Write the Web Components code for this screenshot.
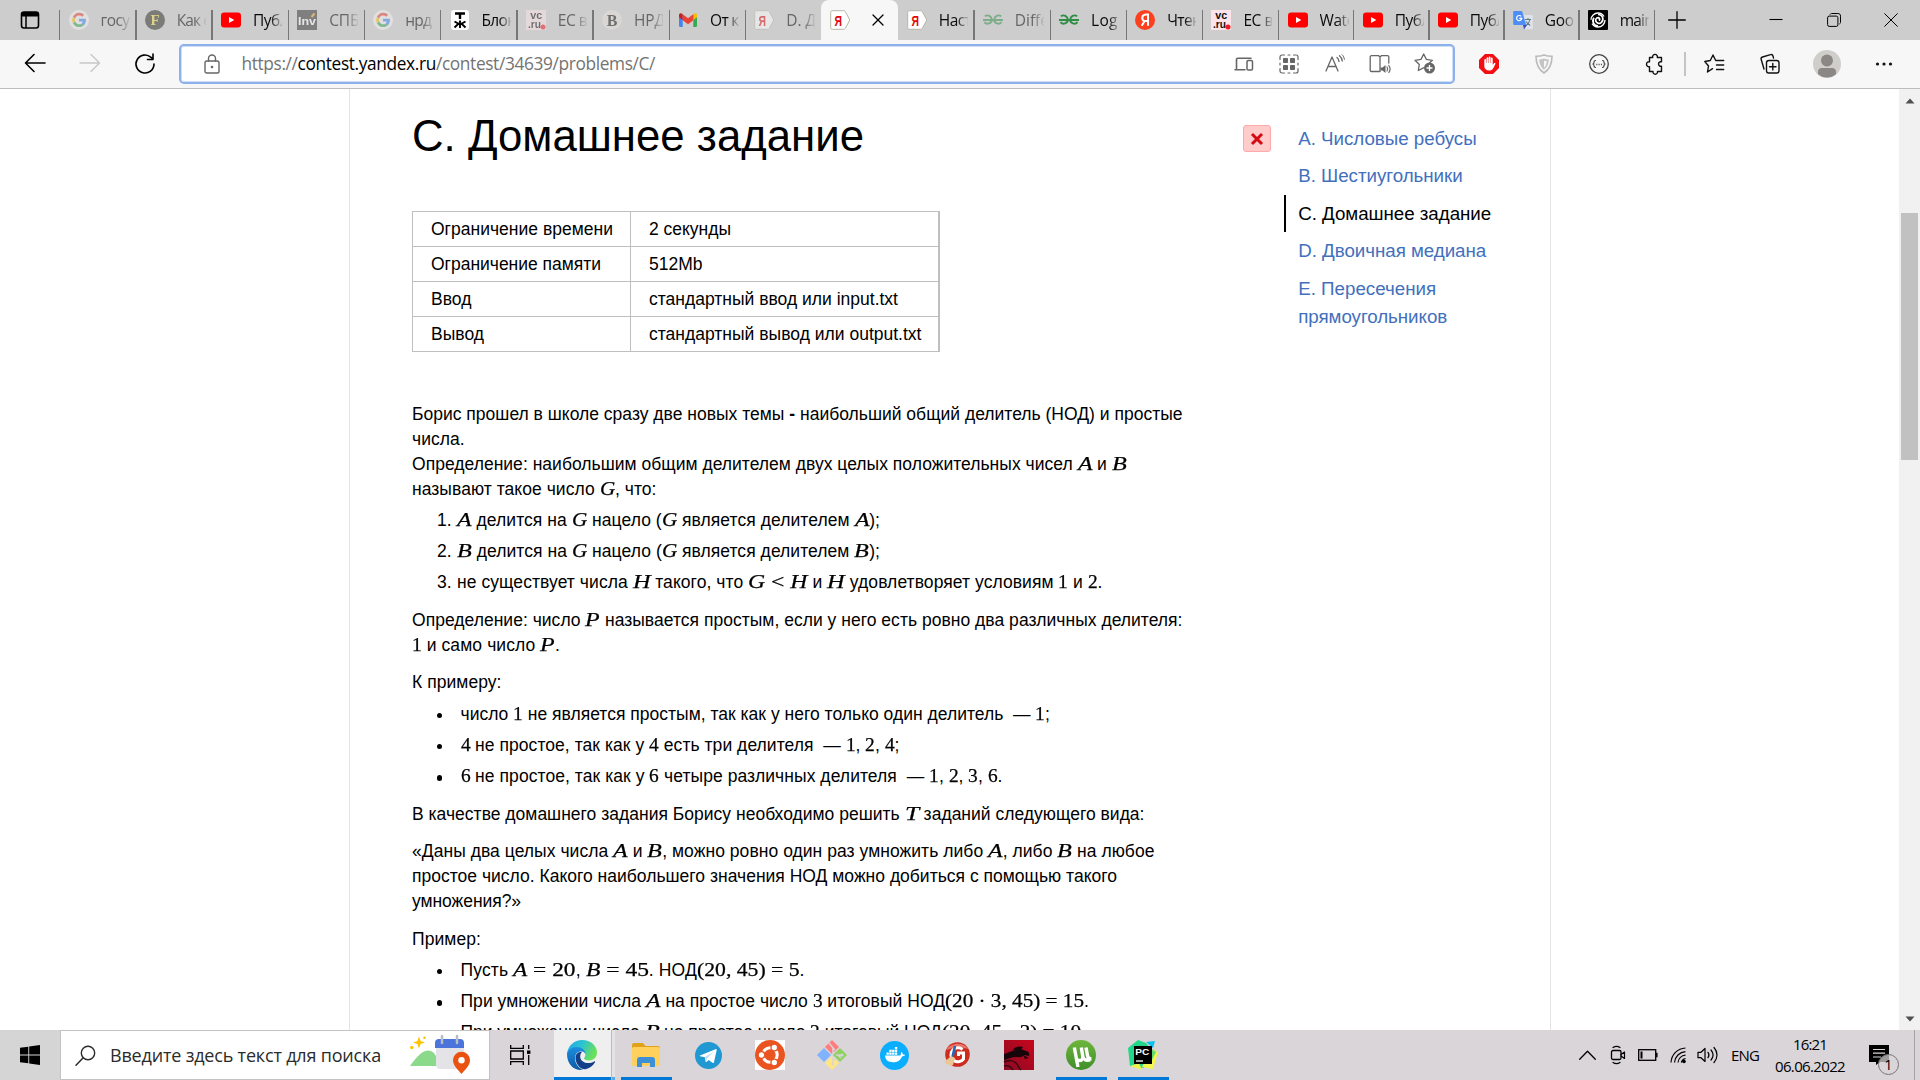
<!DOCTYPE html>
<html lang="ru">
<head>
<meta charset="utf-8">
<title>C. Домашнее задание</title>
<style>
html,body{margin:0;width:1920px;height:1080px;overflow:hidden;background:#fff;color:#000;font-family:"Liberation Sans",Arial,sans-serif}
body{display:flex;flex-direction:column}
</style>
</head>
<body>
<tab-strip></tab-strip>
<tool-bar></tool-bar>
<page-view>
  <problem-title slot="main"><fit-text w="452">C. Домашнее задание</fit-text></problem-title>
  <limits-table slot="main"></limits-table>
  <problem-statement slot="main"></problem-statement>
  <nav-item slot="nav" state="wrong"><fit-text w="178.500">A. Числовые ребусы</fit-text></nav-item>
  <nav-item slot="nav"><fit-text w="164.5">B. Шестиугольники</fit-text></nav-item>
  <nav-item slot="nav" current><fit-text w="193">C. Домашнее задание</fit-text></nav-item>
  <nav-item slot="nav"><fit-text w="188">D. Двоичная медиана</fit-text></nav-item>
  <nav-item slot="nav"><fit-text w="138">E. Пересечения</fit-text><br><fit-text w="149">прямоугольников</fit-text></nav-item>
</page-view>
<task-bar></task-bar>

<script>
const G='<path fill="#ea4335" d="M10 4.2c1.6 0 3 .6 4.100 1.600l2.500-2.500A9 9 0 0 0 2.200 5.800l3 2.300A5.100 5.100 0 0 1 10 4.200z"/><path fill="#fbbc05" d="M5.200 8.100l-3-2.300a9 9 0 0 0 0 8.400l3-2.300a5.500 5.500 0 0 1 0-3.800z"/><path fill="#34a853" d="M5.200 11.900l-3 2.300A9 9 0 0 0 16 17l-2.800-2.300c-2.800 1.900-6.800.6-8-2.800z"/><path fill="#4285f4" d="M10 8.300v3.600h4.800a4.200 4.200 0 0 1-1.600 2.800L16 17c2.200-2 3.200-5 2.800-8.700z"/>';
const YT='<rect y="2.500" width="20" height="15" rx="3.200" fill="#f00"/><path d="M8 7l5.300 3L8 13z" fill="#fff"/>';
const YA='<path d="M2.500.7h10.800c1 0 1.500.3 2 1l4 7.300c.4.700.4 1.300 0 2l-4 7.300c-.5.700-1 1-2 1H2.500c-1.200 0-1.800-.6-1.800-1.800v-15C.7 1.300 1.300.7 2.500.7z" fill="#fff" stroke="#b5b5a8"/><text x="8.300" y="16" text-anchor="middle" font-family="Liberation Sans" font-weight="700" font-size="15" textLength="7.500" lengthAdjust="spacingAndGlyphs" fill="#e0080c">Я</text>';
const VC='<rect width="20" height="20" fill="#fde4ea"/><text x="4.200" y="9" font-family="Liberation Sans" font-weight="700" font-size="10.500" textLength="12" lengthAdjust="spacingAndGlyphs" fill="#111">vc</text><text x="2" y="17.500" font-family="Liberation Sans" font-weight="700" font-size="10.500" textLength="13" lengthAdjust="spacingAndGlyphs" fill="#111">.ru</text><circle cx="17" cy="17" r="2.500" fill="#f01823"/>';
const GG='<g fill="none" stroke="#2f8d46" stroke-width="1.900"><path d="M1.800 6.200C5 4.300 8.500 6 8.800 9.500c.2 4-5 5.600-7.300 2.600M0 10h20M18.200 6.200c-3.200-1.900-6.700-.2-7 3.300-.2 4 5 5.600 7.300 2.600"/></g>';
const S='fill="none" stroke="currentColor" stroke-linecap="round" stroke-linejoin="round"';
/* name: [width, height, markup]; the viewBox always equals the drawn size */
const ICONS={
 tabs:[20,20,`<rect x="1.500" y="2" width="17" height="16" rx="2.500" ${S} stroke-width="1.600"/><path d="M1.500 6.500V4.500A2.500 2.500 0 0 1 4 2h12a2.500 2.500 0 0 1 2.500 2.500v2z" fill="currentColor"/><path d="M6 6v12" stroke="currentColor" stroke-width="1.500"/>`],
 google:[20,20,'<circle cx="10" cy="10" r="10" fill="#f4f4f4"/><g transform="translate(2.200 2.200) scale(.78)">'+G+'</g>'],
 forbes:[20,20,'<circle cx="10" cy="10" r="10" fill="#2b2b24"/><text x="10" y="15.300" text-anchor="middle" font-family="Liberation Serif" font-weight="700" font-size="15" fill="#f0d848">F</text>'],
 youtube:[20,20,YT],
 inv:[20,20,'<rect width="20" height="20" fill="#333"/><text x="1" y="15" font-family="Liberation Sans" font-weight="700" font-size="11.500" textLength="18" lengthAdjust="spacingAndGlyphs" fill="#fff">Inv</text><path d="M14.500 7l3-3.500" stroke="#f6a31b" stroke-width="2"/>'],
 tj:[20,20,'<rect width="18" height="20" x="1" rx="3" fill="#fff"/><path d="M5 3.500h10M10 3.500V9" stroke="#000" stroke-width="2.400"/><path d="M10 10.500V18M4.500 11.500l4 2.300-4 3.700M15.500 11.500l-4 2.300 4 3.700M8 14h4" stroke="#000" stroke-width="1.900" fill="none"/>'],
 vc:[20,20,VC],
 b:[20,20,'<circle cx="10" cy="10" r="10" fill="#e6e0dc"/><text x="10" y="15.500" text-anchor="middle" font-family="Liberation Serif" font-weight="700" font-size="16" fill="#111">B</text>'],
 gmail:[20,20,'<path d="M1 4.800h3.700V17H2.200C1.500 17 1 16.500 1 15.800z" fill="#4285f4"/><path d="M15.300 4.800H19v11c0 .7-.5 1.200-1.200 1.200h-2.500z" fill="#34a853"/><path d="M15.300 4.200c2-1.700 3.700-.7 3.700.8v2.200l-3.700 3z" fill="#fbbc04"/><path d="M4.700 4.200C2.700 2.500 1 3.500 1 5v2.200l3.700 3z" fill="#c5221f"/><path d="M4.700 4.200L10 8.300l5.300-4.100v6L10 14.300l-5.300-4.100z" fill="#ea4335"/>'],
 ya:[20,20,YA], gg:[20,20,GG],
 yared:[20,20,'<circle cx="10" cy="10" r="10" fill="#fc3f1d"/><path d="M13 15.800V4.500h-1.800c-4.800 0-5 5.300-1.700 6.700L6.700 15.800M13 11h-2.700" fill="none" stroke="#fff" stroke-width="2"/>'],
 translate:[20,20,'<path d="M7 5h11.500c.8 0 1.300.5 1.300 1.300V18c0 .8-.5 1.300-1.300 1.300H11z" fill="#dfe2e8"/><path d="M12 9.500h6M15 8v1.500M17 9.500c-.5 2.500-2 4.500-4 6M13.200 11.500c1 2 2.300 3 4 4" stroke="#607d8b" stroke-width="1.100" fill="none"/><path d="M10 15l4 0-3 4.500z" fill="#3a4fc0"/><path d="M1.500 1H9l4.300 14H1.500C.7 15 .2 14.500.2 13.700V2.300C.2 1.500.7 1 1.500 1z" fill="#4d8df6"/><path d="M8.200 6.400a2.600 2.600 0 1 0 .6 2H6.300" fill="none" stroke="#fff" stroke-width="1.200"/>'],
 swirl:[20,20,'<rect width="20" height="20" rx="1" fill="#000"/><circle cx="10" cy="10" r="7" fill="none" stroke="#fff" stroke-width="1.300" stroke-dasharray="18 4"/><path d="M10 4.500c5 0 6.500 6 2.800 8.400-3.600 2-7-2.600-4-4.800 2.400-1.300 4 1.400 2 2.400M10 15.800c-4.500 0-6.400-4.800-4-8" fill="none" stroke="#fff" stroke-width="1.700"/>'],
 close:[12,12,`<path d="M1 1l10 10M11 1L1 11" ${S} stroke-width="1.300"/>`],
 plus:[18,18,`<path d="M9 .7v16.600M.7 9h16.600" ${S} stroke-width="1.300"/>`],
 min:[14,14,`<path d="M.5 6.500h13" stroke="currentColor" stroke-width="1.100"/>`],
 restore:[14,14,`<path d="M.6 4.600a1.500 1.500 0 0 1 1.500-1.500h7.300a1.500 1.500 0 0 1 1.500 1.500v7.300a1.500 1.500 0 0 1-1.500 1.500H2.100a1.500 1.500 0 0 1-1.500-1.500zM3.200 1.200c.5-.6 1-.7 1.600-.7h6c1.800 0 2.700.9 2.700 2.700v6c0 .7-.1 1.200-.7 1.600" ${S} stroke-width="1"/>`],
 xwin:[14,14,`<path d="M.7.7l12.600 12.600M13.300.7L.7 13.300" ${S} stroke-width="1"/>`],
 back:[22,20,`<path d="M21 10H1.500M10 1.500L1.500 10l8.500 8.500" ${S} stroke-width="1.600"/>`],
 fwd:[22,20,`<path d="M1 10h19.500M12 1.500l8.500 8.500-8.500 8.500" ${S} stroke-width="1.400"/>`],
 reload:[22,22,`<path d="M20 11a9 9 0 1 1-3-6.700l2 2M19 1v5.500h-5.500" ${S} stroke-width="1.600"/>`],
 lock:[16,20,`<rect x="1" y="7" width="14" height="12" rx="1.800" ${S} stroke-width="1.400"/><path d="M4.500 7V4.500a3.500 3.500 0 0 1 7 0V7" ${S} stroke-width="1.400"/><circle cx="8" cy="13" r="1.300" fill="currentColor"/>`],
 device:[20,16,`<path d="M2.500 12.500V3.500A1.300 1.300 0 0 1 3.800 2.200H17M1 13.800h10" ${S} stroke-width="1.600"/><rect x="13" y="4.500" width="5.500" height="9.500" rx="1.200" ${S} stroke-width="1.500"/>`],
 apps:[20,20,`<path d="M1 5.500V3a2 2 0 0 1 2-2h2.500M14.500 1H17a2 2 0 0 1 2 2v2.500M19 14.500V17a2 2 0 0 1-2 2h-2.500M5.500 19H3a2 2 0 0 1-2-2v-2.500M9 1h2M9 19h2M1 9v2M19 9v2" ${S} stroke-width="1.200"/><g fill="currentColor"><rect x="4" y="4" width="5" height="5" rx=".8"/><rect x="11" y="4" width="5" height="5" rx=".8"/><rect x="4" y="11" width="5" height="5" rx=".8"/><rect x="11" y="11" width="5" height="5" rx=".8"/></g>`],
 read:[20,20,`<path d="M1 17L7 3l6 14M3.200 12.500h7.600M12 3.500c1.300 1 1.900 2.300 2 4M14.500 1.700c1.700 1.300 2.600 3 2.800 5.300" ${S} stroke-width="1.300"/><path d="M17.200.8c1.300 1.200 2 2.800 2.200 4.600" ${S} stroke-width="1"/>`],
 book:[22,20,`<path d="M11 3v14.500M11 17.500H2.500a1.300 1.300 0 0 1-1.300-1.300V3a1.300 1.300 0 0 1 1.300-1.300h7.200L11 3l1.300-1.300h6.200A1.300 1.300 0 0 1 19.800 3v6" ${S} stroke-width="1.300"/><path d="M11.500 13.500h2l3-2.500v8l-3-2.500h-2z" fill="currentColor"/><path d="M18 13c.8 1.200.8 2.800 0 4M19.800 11.500c1.500 2 1.500 5 0 7" ${S} stroke-width="1.200"/>`],
 starplus:[22,21,`<path d="M9.500 14.800L4.300 17.500l1-6L1 7.300l6-.9L9.700 1l2.700 5.400 6 .9-3 2.800" ${S} stroke-width="1.300"/><circle cx="15.500" cy="15" r="5.500" fill="currentColor"/><path d="M15.500 12v6M12.500 15h6" stroke="#fff" stroke-width="1.400"/>`],
 adblock:[20,20,'<path d="M6 0h8l6 6v8l-6 6H6l-6-6V6z" fill="#f40d12"/><path d="M5.300 10V6a.9.900 0 0 1 1.800 0v3h.4V4.200a.9.900 0 0 1 1.800 0V9h.4V3.500a.9.900 0 0 1 1.800 0V9h.4V4.500a.9.900 0 0 1 1.800 0v6.300l1.500-1.700c.7-.5 1.600.1 1.200.9-1.200 2-2 6-5.300 6.500-3.500.3-5.800-1.300-5.800-4.500z" fill="#fff"/>'],
 shield:[18,20,'<path d="M9 1c2.500 1 5 1.300 8 1.300C17 10 14.500 15.500 9 19 3.500 15.500 1 10 1 2.300c3 0 5.500-.3 8-1.300z" fill="none" stroke="#bbb" stroke-width="1.600"/><path d="M9 4.500c1.500.6 3 .9 4.800.9-.2 4.600-1.800 8-4.800 10.300-3-2.300-4.600-5.700-4.800-10.300 1.800 0 3.300-.3 4.800-.9z" fill="#c4c4c4"/><path d="M9 6.500c1 .4 2 .5 2.800.6-.2 2.900-1.200 5.200-2.800 6.700z" fill="#f7f7f7"/>'],
 braces:[20,20,`<circle cx="10" cy="10" r="9.300" ${S} stroke-width="1.300"/><path d="M6.500 6.500c-1.500 0-1.500.8-1.500 1.700S5 10 3.800 10C5 10 5 10.900 5 11.800s0 1.700 1.500 1.700M13.500 6.500c1.500 0 1.500.8 1.500 1.700s0 1.800 1.200 1.800c-1.200 0-1.200.9-1.200 1.800s0 1.700-1.500 1.700" ${S} stroke-width="1.200"/><path d="M7.300 10.500h1M9.600 10.500h1M11.900 10.500h1" stroke="currentColor" stroke-width="1.300"/>`],
 puzzle:[20,20,`<path d="M5.500 3.500h3.200a2.400 2.400 0 1 1 4.600 0h4.200v4.300a2.300 2.300 0 1 0 0 4.400v5.300h-4a2.300 2.300 0 1 1-4.500 0H5.500v-4.800a2.500 2.500 0 1 1 0-4.900z" ${S} stroke-width="1.400"/>`],
 starlist:[21,20,`<path d="M8.500 14.700l-5 3.300 1-6L.8 7.500l5.500-1L9 1l2.700 5.500h8M12.500 11h7.200M12.500 15.500h7.200" ${S} stroke-width="1.400"/>`],
 collect:[20,20,`<rect x="6.500" y="6.500" width="12.500" height="12.500" rx="2.300" ${S} stroke-width="1.400"/><path d="M12.800 9.500v6.500M9.500 12.800H16M4 15L1.200 5.500A2 2 0 0 1 2.500 3l8-2.300A2 2 0 0 1 13 2l.5 2" ${S} stroke-width="1.400"/>`],
 avatar:[28,28,'<circle cx="14" cy="14" r="14" fill="#d0cecb"/><circle cx="14" cy="10.500" r="6" fill="#8a8785"/><path d="M5 24c-.5-4.500 1.500-6 4-6h10c2.500 0 4.500 1.500 4 6-5 4.700-13 4.700-18 0z" fill="#8a8785"/>'],
 dots:[18,4,'<g fill="currentColor"><circle cx="2.500" cy="2" r="1.600"/><circle cx="9" cy="2" r="1.600"/><circle cx="15.500" cy="2" r="1.600"/></g>'],
 cross:[14,12,'<path d="M2 1l10 10M12 1L2 11" stroke="#d30b12" stroke-width="3"/>'],
 start:[20,20,'<path d="M0 2.800L8.300 1.700v7.900H0zM9.200 1.500L20 0v9.600H9.200zM0 10.400h8.300v7.900L0 17.200zM9.200 10.400H20V20L9.200 18.500z" fill="#000"/>'],
 search:[21,21,`<circle cx="13" cy="8" r="6.700" ${S} stroke-width="1.400"/><path d="M8.200 12.800L1 20.200" ${S} stroke-width="1.500"/>`],
 art:[60,38,'<path d="M9 .5l1.600 4.400L15 6.500l-4.400 1.600L9 12.500 7.400 8.100 3 6.500l4.400-1.600z" fill="#ffc400"/><circle cx="1.800" cy="11.500" r="1.700" fill="#ffc400"/><circle cx="14.500" cy="1.800" r="1.300" fill="#ffc400"/><rect x="26" y="4" width="28" height="29" rx="4" fill="#e4e4e8"/><path d="M0 30c5-7 11-14.500 17-15.500 5-.5 8 3 9 6v9.500z" fill="#8bd98a"/><path d="M25 12V7a4 4 0 0 1 4-4h21a4 4 0 0 1 4 4v5z" fill="#4a73dc"/><path d="M32 0v7M47 0v7" stroke="#b9bcc4" stroke-width="2.500" stroke-linecap="round"/><path d="M51.500 38c-3-4-8.500-8.300-8.500-13.800a8.500 8.500 0 0 1 17 0C60 29.700 54.500 34 51.500 38z" fill="#ea5212"/><circle cx="51.500" cy="24.300" r="3.200" fill="#fff"/>'],
 taskview:[21,20,`<path d="M.7 0v3.300h12.600V0M.7 20v-3.300h12.600V20M.7 6h12.600v8H.7zM18.700 0v4M18.700 10v10" fill="none" stroke="#000" stroke-width="1.300"/><rect x="17" y="5.500" width="3.400" height="3.400" fill="#000"/>`],
 edge:[30,30,'<defs><linearGradient id="a" x1="0" y1="0" x2="1" y2=".4"><stop offset="0" stop-color="#1fa5e6"/><stop offset=".5" stop-color="#2bc3d2"/><stop offset="1" stop-color="#6be05a"/></linearGradient><linearGradient id="c" x1="0" y1="0" x2="0" y2="1"><stop offset="0" stop-color="#1d8fe0"/><stop offset="1" stop-color="#0c59a4"/></linearGradient></defs><path d="M0 14C1 5 8 0 15 0c9 0 15 6 15 12.500 0 5-4 8-8 8-3 0-5-1-5-2.200 0-.9 1.400-1.300 1.400-3.300 0-3-3-5.500-7-5.500C6 9.500 1 12 0 14z" fill="url(#a)"/><path d="M0 14c.5-3.500 4.500-7 9.500-7 5.500 0 9 3.500 9 7-1-2.300-3.500-3-5.500-2.500-4 1-5 4-5 7 0 5 3.500 9.500 8 11.300C7 31 0 24.500 0 14z" fill="url(#c)"/><path d="M8.500 17c-.5 6 4.500 12.800 10 12.200 4-.8 7.500-3.500 9.500-7 .3-.8-.3-1-.8-.7-6 3.500-14 1-14-5 0-2.500 1-4 2-4.700-3.500-.3-6.500 2-6.700 5.200z" fill="#123f87"/>'],
 folder:[28,26,'<path d="M0 3a2 2 0 0 1 2-2h9l2.500 3H26a2 2 0 0 1 2 2v4H0z" fill="#e0a11b"/><rect y="5" width="28" height="19" rx="1.500" fill="#ffd05c"/><path d="M5 25v-7a3 3 0 0 1 3-3h12a3 3 0 0 1 3 3v7h-5v-4h-8v4z" fill="#3d8fd6"/>'],
 telegram:[27,27,'<circle cx="13.500" cy="13.500" r="13.500" fill="#2098d1"/><path d="M5 13.500L20.500 7.200c.8-.3 1.300.2 1.100 1.200L19 20.200c-.2.900-.8 1-1.500.6l-3.900-2.900-2 2c-.5.400-.9.200-1-.4l-.8-4.200L5 14.300c-.7-.2-.7-.6 0-.8z" fill="#fff"/><path d="M9.800 15.300l8.700-5.500-6.700 6.700-.3 3.400z" fill="#b9dcf0"/>'],
 ubuntu:[30,30,'<rect width="30" height="30" fill="#fff"/><circle cx="15" cy="15" r="15" fill="#e95420"/><circle cx="15" cy="15" r="7.200" fill="none" stroke="#fff" stroke-width="3"/><g fill="#fff" stroke="#e95420" stroke-width="1.300"><circle cx="6.500" cy="15" r="3.300"/><circle cx="19.300" cy="7.500" r="3.300"/><circle cx="19.300" cy="22.500" r="3.300"/></g>'],
 git:[30,30,'<path d="M15 0l7 7-7 7-7-7z" fill="#ff7d7d"/><path d="M7 8l7 7-7 7-7-7z" fill="#80b3ff"/><path d="M23 8l7 7-7 7-7-7z" fill="#8dd35f"/><path d="M15 16l7 7-7 7-7-7z" fill="#ffe680"/><path d="M12 3l4 5v6M16 8l2 2M16 16v8M16 20l3-1M19 15h7M21 15l3 3" fill="none" stroke="#d9d5d8" stroke-width="1.500"/><circle cx="16" cy="24" r="1.500" fill="#d9d5d8"/><circle cx="25" cy="15" r="1.500" fill="#d9d5d8"/>'],
 docker:[29,29,'<circle cx="14.500" cy="14.500" r="14.500" fill="#0baeff"/><path d="M5 14.500h15.500c.4-1.500.2-2.700.8-3.500 1 .6 1.500 1.500 1.500 2.500.8-.1 1.700 0 2.200.5-.6 1-1.800 1.400-3 1.400-1.500 4-4.500 5.800-9 5.800-5 0-7.800-2.500-8-6.700z" fill="#fff"/><g fill="#fff"><path d="M6.500 11.500h2.300v2.300H6.500zM9.300 11.500h2.300v2.300H9.300zM12.100 11.500h2.300v2.300h-2.300zM14.900 11.500h2.300v2.300h-2.300zM9.300 8.700h2.300V11H9.300zM12.100 8.700h2.300V11h-2.300zM14.900 8.700h2.300V11h-2.300zM14.900 6h2.300v2.200h-2.300z"/></g>'],
 ccleaner:[28,28,'<circle cx="14.500" cy="13.500" r="12.300" fill="#cf2a1e"/><path d="M3.500 9C7 2 20 0 25 8c-8-3-14-2-21.500 1z" fill="#e8776a"/><path d="M19.500 8.500a7 7 0 1 0 1 9.500V12h-5v3" fill="none" stroke="#fff" stroke-width="3"/><path d="M12 5l-2.500 11" stroke="#2467b5" stroke-width="2.600"/><path d="M8 15l4 2-2 7c-3 .7-6.500-.3-8.500-3z" fill="#ecc796"/>'],
 kali:[30,30,'<defs><linearGradient id="k" x1="0" y1="1" x2="1" y2="0"><stop offset="0" stop-color="#8c0a24"/><stop offset="1" stop-color="#c8061c"/></linearGradient></defs><rect width="30" height="30" fill="url(#k)"/><path d="M0 14c5-1 8-4 13-4 4-2 7 0 9 1 2 0 4 2 3 5l-5-1c-2 3-6 2-8 2-5 0-8 2-12 3zM9 10c3-4 7-4 10-3l-3 4zM19 15l6 3-4 1z" fill="#16060a"/><path d="M0 22c4-2 9-2 12 1 3 3 2 5 5 7M0 26c4-1 7 0 9 4" fill="none" stroke="#3c0713" stroke-width="1.500"/>'],
 utorrent:[30,30,'<defs><linearGradient id="u" x1="0" y1="0" x2="0" y2="1"><stop offset="0" stop-color="#6eb63c"/><stop offset="1" stop-color="#3f8f2a"/></linearGradient></defs><circle cx="15" cy="15" r="15" fill="url(#u)"/><path d="M8.300 7.500l2 10.500c.6 3 4.700 3.300 6 1.200.8-1.200.5-2.600.3-3.700L15.300 7.500M16.700 16c.8 3.600 3.200 5 7.500 3.800M10.200 18l1.800 9M20 7.500l1.500 8c.3 2.200 1.500 3.500 4 3.300" fill="none" stroke="#fff" stroke-width="3.400"/>'],
 pycharm:[30,30,'<path d="M10 0l8 3 5 6-7 19L2 26 0 8z" fill="#21d789"/><path d="M18 2l9-1-2 7z" fill="#07c3f2"/><path d="M23 9l7 3-5 17-11-2z" fill="#f4f64c"/><path d="M22 8l6 4-4 8z" fill="#5fdc6c"/><path d="M2 26l9-3 3 7z" fill="#f1f04b"/><rect x="6" y="6" width="18" height="18" fill="#000"/><text x="7.300" y="14.700" font-family="Liberation Sans" font-weight="700" font-size="9.500" textLength="14" lengthAdjust="spacingAndGlyphs" fill="#fff">PC</text><path d="M8 21h7" stroke="#fff" stroke-width="1.300"/>'],
 chev:[17,10,`<path d="M.7 9.300L8.500 1.300l7.800 8" ${S} stroke-width="1.300"/>`],
 cam:[16,18,`<rect x="1.500" y="4.500" width="9.500" height="9" rx="1.500" ${S} stroke-width="1.300"/><path d="M11 8.500l3.500-2.500v6.500L11 10M3 1.500c2-1.300 5-1.300 7 0M3 16.500c2 1.300 5 1.300 7 0" ${S} stroke-width="1.200"/>`],
 batt:[20,12,'<rect x=".7" y=".7" width="17" height="10.600" fill="none" stroke="#000" stroke-width="1.300"/><path d="M18.800 3.700v4.600" stroke="#000" stroke-width="1.500"/><path d="M3.500 2.500v7" stroke="#000" stroke-width="2"/>'],
 wifi:[17,17,'<g fill="none" stroke="#000" stroke-width="1.200"><path d="M1 15.500C1.500 7.500 7.500 1.500 15.500 1M4.500 15.500C5 9.500 9.500 5 15.500 4.700M8 15.500c.5-4 3.500-7 7.500-7.300M11.300 15.500c.5-2 1.800-3.500 4.200-4"/></g><circle cx="14" cy="14.500" r="1.800"/>'],
 vol:[22,18,`<path d="M1 6.300h3L8 2.500v13l-4-3.800H1z" ${S} stroke-width="1.200"/><path d="M11 6.300c1.200 1.700 1.200 3.700 0 5.400M14 4c2.500 3 2.500 7 0 10M17 1.500c4 4.500 4 10.500 0 15" ${S} stroke-width="1.200"/>`],
 note:[30,31,'<path d="M0 0h20v17h-9l-4 3v-3H0z" fill="#000"/><path d="M4 4.500h12M4 8.200h12M4 12h8" stroke="#d9d5d8" stroke-width="1.200"/><circle cx="19.500" cy="19.500" r="10" fill="#d9d5d8" fill-opacity=".72" stroke="#777" stroke-width="1"/><text x="19.500" y="25" text-anchor="middle" font-family="Open Sans" font-size="14.500" fill="#000">1</text>'],
 up:[10,6,'<path d="M5 .5L9.500 5.500h-9z" fill="#505050"/>'],
 down:[10,6,'<path d="M5 5.500L9.500.5h-9z" fill="#505050"/>']
};
function component(name,html,init){
  const t=document.createElement('template');t.innerHTML=html;
  customElements.define(name,class extends HTMLElement{
    static observedAttributes=['name'];
    constructor(){super();this.attachShadow({mode:'open'}).append(t.content.cloneNode(true));}
    connectedCallback(){if(init)init(this,this.shadowRoot);}
    attributeChangedCallback(){if(name==='ui-icon')init(this,this.shadowRoot);}
  });
}
component('ui-icon','<style>:host{display:block;flex:none}svg{display:block;overflow:visible}</style><div></div>',(h,r)=>{
  const icon=ICONS[h.getAttribute('name')];
  if(!icon)return;
  const [w,hh,m]=icon;
  r.querySelector('div').innerHTML=`<svg width="${w}" height="${hh}" viewBox="0 0 ${w} ${hh}">${m}</svg>`;
});
/* inline formula: serif glyphs stretched to the advance width in w */
component('tex-m','<style>:host{display:inline-block;letter-spacing:0;white-space:pre;font:19.4px/20px "Liberation Serif",serif;-webkit-text-stroke:.25px #000}span{display:inline-block;transform-origin:0 50%}</style><span><slot></slot></span>',(h,r)=>{
  const s=r.querySelector('span');
  const w=+h.getAttribute('w'), n=s.getBoundingClientRect().width;
  if(w&&n){h.style.width=w+'px';s.style.transform=`scaleX(${w/n})`;}
});

component('browser-tab',`<style>
:host{display:flex;align-items:center;box-sizing:border-box;width:76.2px;height:40px;flex:none;padding-left:9px;position:relative;font:15.500px/20px "Open Sans","Noto Sans",sans-serif;color:#0a0a0a}
:host([slim]){width:75.050px}
:host::before{content:"";position:absolute;left:-.5px;top:10px;height:30px;width:1.300px;background:#777}
:host([nosep])::before{display:none}
:host([sleep]) ui-icon{opacity:.5}:host([sleep]){color:#666}
.t{margin-left:12px;width:29px;overflow:hidden;white-space:nowrap;-webkit-mask-image:linear-gradient(90deg,#000 60%,transparent 105%);mask-image:linear-gradient(90deg,#000 60%,transparent 105%)}
:host([active]){background:#f7f7f7;border-radius:8px 8px 0 0;width:77px;margin-right:-.8px;color:#000}
:host([active]) .t{-webkit-mask-image:none;mask-image:none;padding-left:10px}
:host([active])::before{display:none}
</style><ui-icon></ui-icon><div class="t"><slot></slot></div>`,(h,r)=>r.querySelector('ui-icon').setAttribute('name',h.getAttribute('icon')));

component('tab-strip',`<style>
:host{display:flex;height:40px;flex:none;background:#cdcdcd;align-items:center;color:#000;overflow:hidden}
.first{width:59.600px;flex:none;display:flex;justify-content:center}
.tabs{display:flex;flex:none}
.edge{width:1.300px;height:30px;background:#777;flex:none;margin-top:10px}
.new{width:43px;display:flex;justify-content:center}
.win{margin-left:auto;display:flex}.win div{width:57.500px;height:40px;display:flex;align-items:center;justify-content:center}
</style>
<div class="first"><ui-icon name="tabs"></ui-icon></div><div class="tabs"></div><div class="edge"></div>
<div class="new"><ui-icon name="plus"></ui-icon></div>
<div class="win"><div><ui-icon name="min"></ui-icon></div><div><ui-icon name="restore"></ui-icon></div><div><ui-icon name="xwin"></ui-icon></div></div>`,(h,r)=>{
 const list=[['google','госу','s',29],['forbes','Как с','s',33],['youtube','Публ','',35],['inv','СПБ Г','s',42],['google','нрд н','s',38],['tj','Блок','',33],['vc','ЕС вв','s',38],['b','НРД-','s',36],['gmail','От ко','',37],['ya','D. До','s',39],['ya','','a'],['ya','Наст','n',33],['gg','Diffe','s',34],['gg','Log i','',35],['yared','Чтен','',34],['vc','ЕС вв','',38],['youtube','Watc','',34,1],['youtube','Публ','',35,1],['youtube','Публ','',35,1],['translate','Goog','',37,1],['swirl','main','',33,1]];
 r.querySelector('.tabs').innerHTML=list.map(([i,t,f,w,s])=>`<browser-tab icon="${i}"${f=='s'?' sleep':f=='a'?' active':f=='n'?' nosep':''}${s?' slim':''}>${f=='a'?'<ui-icon name="close"></ui-icon>':`<fit-text w="${w}">${t}</fit-text>`}</browser-tab>`).join('');
});
component('tool-bar',`<style>
:host{display:flex;height:48px;flex:none;background:#f7f7f7;border-bottom:1px solid #bdbdbd;align-items:center;box-sizing:content-box}
.n{width:55.200px;display:flex;justify-content:center;flex:none}
.left{display:flex;padding-left:7px;width:172px;flex:none}
.addr{box-sizing:border-box;width:1275.500px;height:40px;flex:none;background:#fff;border:2px solid #8cb1ea;box-shadow:inset 0 0 0 1px #cfe0f8;border-radius:5px;display:flex;align-items:center;color:#666;padding-left:23px;margin-top:-1px}
.url{margin-left:21.500px;font:17.300px/24px "Open Sans","Noto Sans",sans-serif;color:#737373}
.url b{font-weight:400;color:#000}
.in{margin-left:auto;display:flex;align-items:center;padding-right:5px}.in div{width:45.200px;display:flex;justify-content:center}
.right{display:flex;align-items:center;padding-left:7px;color:#111}
.sep{width:1.500px;height:24px;background:#c4c4c4;margin:0 1.500px 0 3px}
</style>
<div class="left"><div class="n"><ui-icon name="back"></ui-icon></div><div class="n" style="color:#c8c8c8"><ui-icon name="fwd"></ui-icon></div><div class="n"><ui-icon name="reload"></ui-icon></div></div>
<div class="addr"><ui-icon name="lock"></ui-icon><div class="url"><fit-text w="413.500">https://<b>contest.yandex.ru</b>/contest/34639/problems/C/</fit-text></div>
<div class="in"><div><ui-icon name="device"></ui-icon></div><div><ui-icon name="apps"></ui-icon></div><div><ui-icon name="read"></ui-icon></div><div><ui-icon name="book"></ui-icon></div><div><ui-icon name="starplus"></ui-icon></div></div></div>
<div class="right"><div class="n"><ui-icon name="adblock"></ui-icon></div><div class="n"><ui-icon name="shield"></ui-icon></div><div class="n" style="color:#444"><ui-icon name="braces"></ui-icon></div><div class="n" style="width:54px"><ui-icon name="puzzle"></ui-icon></div><div class="sep"></div><div class="n"><ui-icon name="starlist"></ui-icon></div><div class="n"><ui-icon name="collect"></ui-icon></div><div class="n" style="width:58.500px"><ui-icon name="avatar"></ui-icon></div><div class="n"><ui-icon name="dots"></ui-icon></div></div>`);

component('page-view',`<style>
:host{display:flex;height:941px;flex:none;background:#fff;overflow:hidden}
.sheet{margin-left:349px;width:1200px;border:1px solid #e4e4e4;border-width:0 1px;flex:none;display:flex;height:941px}
.main{padding:22px 0 0 62px;width:800px;flex:none}
.nav{padding:31px 0 0 72px;width:260px}
.bar{margin-left:auto;width:21px;background:#f1f1f1;display:flex;flex-direction:column;align-items:center;justify-content:space-between;padding:9px 0 8px;box-sizing:border-box}
.thumb{width:17px;height:247px;background:#c1c1c1;margin-top:109px}
.top{display:flex;flex-direction:column;align-items:center}
</style>
<div class="sheet"><div class="main"><slot name="main"></slot></div><div class="nav"><slot name="nav"></slot></div></div>
<div class="bar"><div class="top"><ui-icon name="up"></ui-icon><div class="thumb"></div></div><ui-icon name="down"></ui-icon></div>`);
component('problem-title','<style>:host{display:block;font-size:43.750px;line-height:50px;height:100px;white-space:nowrap}</style><slot></slot>');
component('nav-item',`<style>
:host{display:flex;box-sizing:border-box;padding:4.700px 0 4.700px;font-size:18.750px;line-height:28.100px;color:#4270bd;position:relative;white-space:nowrap;padding-left:14.200px}
:host([current]){color:#000;border-left:2px solid #000;padding-left:12.200px}
.s{display:none}
:host([state=wrong]) .s{display:flex;position:absolute;left:-41px;top:5px;width:28px;height:27px;box-sizing:border-box;border:1px solid #ffa9a9;border-radius:3px;background:#ffcbcb;align-items:center;justify-content:center}
</style><div class="s"><ui-icon name="cross"></ui-icon></div><div><slot></slot></div>`);
component('limits-table',`<style>
:host{display:block;width:528px;margin-bottom:49.600px;font-size:17.500px;line-height:25px;border:1px solid #bfbfbf;border-width:1px 1px 0 1px;box-sizing:border-box}
.r{display:grid;grid-template-columns:218px 1fr;border-bottom:1px solid #bfbfbf;height:34px;border-right:1px solid #bfbfbf}
.r div{padding:5px 0 0 18px}.r div:first-child{border-right:1px solid #bfbfbf}
</style><div id="b"></div>`,(h,r)=>{
 r.querySelector('#b').innerHTML=[['Ограничение времени',182,'2 секунды',82],['Ограничение памяти',170,'512Mb',53.5],['Ввод',40.5,'стандартный ввод или input.txt',249],['Вывод',53,'стандартный вывод или output.txt',272.5]].map(a=>`<div class="r"><div><fit-text w="${a[1]}">${a[0]}</fit-text></div><div><fit-text w="${a[3]}">${a[2]}</fit-text></div></div>`).join('');
});
const M={A:14.6,B:14.800,G:15.300,H:17.600,P:14.600,T:14.200};
/* $X$ is an italic variable, $text|width$ a longer formula */
const tex=s=>s.replace(/\$([^$]+)\$/g,(_,e)=>{
  const [t,w]=e.split('|');
  return `<tex-m w="${w||M[t]||9.7*t.length}">${t.replace('<','&lt;').replace(/[A-Z]/g,'<i>$&</i>')}</tex-m>`;
});
component('problem-statement',`<style>
:host{display:block;font-size:17.500px;line-height:25px;white-space:nowrap}
.p{margin-bottom:12.500px}.p.t{margin-bottom:6.250px}
.l{height:25px}
.li{height:25px;margin-bottom:6.250px;display:flex}
.li.e{margin-bottom:12.500px}
.k{width:45px;box-sizing:border-box;padding-left:25px;flex:none}.u{width:48.500px;padding-left:24.500px}
.u::before{content:"";display:block;width:5.500px;height:5.500px;border-radius:50%;background:#000;margin-top:11px}
</style><div id="b"></div>`,(h,r)=>{
 const line=(w,s)=>`<div class="l"><fit-text w="${w}">${tex(s)}</fit-text></div>`;
 const p=(c,...ls)=>`<div class="p ${c}">${ls.map(l=>line(...l)).join('')}</div>`;
 const li=(k,w,s,e)=>`<div class="li ${e?'e':''}"><div class="k ${k?'':'u'}">${k}</div>${line(w,s)}</div>`;
 r.querySelector('#b').innerHTML=
 p('t',[770.5,'Борис прошел в школе сразу две новых темы <b>-</b> наибольший общий делитель (НОД) и простые'],[52.5,'числа.'],[714.5,'Определение: наибольшим общим делителем двух целых положительных чисел $A$ и $B$'],[244.5,'называют такое число $G$, что:'])
 +li('1.',423,'$A$ делится на $G$ нацело ($G$ является делителем $A$);')
 +li('2.',423,'$B$ делится на $G$ нацело ($G$ является делителем $B$);')
 +li('3.',645.5,'не существует числа $H$ такого, что $G < H|59.5$ и $H$ удовлетворяет условиям $1$ и $2$.',1)
 +p('',[770.5,'Определение: число $P$ называется простым, если у него есть ровно два различных делителя:'],[148,'$1$ и само число $P$.'])
 +p('t',[89.5,'К примеру:'])
 +li('',589.5,'число $1$ не является простым, так как у него только один делитель &nbsp;— $1$;')
 +li('',439,'$4$ не простое, так как у $4$ есть три делителя &nbsp;— $1$, $2$, $4$;')
 +li('',542,'$6$ не простое, так как у $6$ четыре различных делителя &nbsp;— $1$, $2$, $3$, $6$.',1)
 +p('',[732.5,'В качестве домашнего задания Борису необходимо решить $T$ заданий следующего вида:'])
 +p('',[742.5,'«Даны два целых числа $A$ и $B$, можно ровно один раз умножить либо $A$, либо $B$ на любое'],[705,'простое число. Какого наибольшего значения НОД можно добиться с помощью такого'],[109,'умножения?»'])
 +p('t',[69,'Пример:'])
 +li('',344,'Пусть $A = 20|62.5$, $B = 45|63$. НОД$(20, 45) = 5|102.5$.')
 +li('',628.5,'При умножении числа $A$ на простое число $3$ итоговый НОД$(20 · 3, 45) = 15|139$.')
 +li('',625,'При умножении числа $B$ на простое число $2$ итоговый НОД$(20, 45 · 2) = 10|139$.');
});
component('task-app',`<style>:host{display:flex;flex-direction:column;align-items:center;justify-content:space-between;width:62.150px;height:50px;flex:none}
div{height:30px;margin-top:10px;display:flex;align-items:center}s{display:none;height:3px;width:51px;background:#0078d7}
:host([open]) s{display:block}
:host([front]){width:57px;background:#efefef}:host([front]) s{width:57px}
</style><div><ui-icon></ui-icon></div><s></s>`,(h,r)=>r.querySelector('ui-icon').setAttribute('name',h.getAttribute('icon')));
component('task-bar',`<style>
:host{display:flex;height:50px;flex:none;background:#d9d5d8;font-family:"Open Sans","Noto Sans",sans-serif;color:#000;align-items:center}
.start{width:60px;height:50px;background:#d5d5d5;display:flex;align-items:center;justify-content:center;flex:none}
.find{box-sizing:border-box;width:429.500px;height:50px;background:#fff;border:1px solid #c3c3c3;display:flex;align-items:center;padding-left:14px;flex:none;font-size:18px;color:#2b2b2b}
.find .x{margin-left:14px;width:300px}
.tv{width:64px;display:flex;justify-content:center;padding-left:0;flex:none}
.stack{width:4.500px;height:50px;background:linear-gradient(#e4e2e4 47px,#5aa7e4 47px);border-left:1px solid #bbb;box-sizing:border-box;flex:none}
.tray{margin-left:auto;display:flex;align-items:center;height:50px;width:341px;flex:none}
.clk{width:72px;display:flex;flex-direction:column;align-items:center;font-size:15px;line-height:22.500px;margin-left:15px}
.end{margin-left:auto;width:6px;height:50px;border-left:1px solid #a5a1a5;box-sizing:border-box}
</style>
<div class="start"><ui-icon name="start"></ui-icon></div>
<div class="find"><ui-icon name="search"></ui-icon><div class="x"><fit-text w="271">Введите здесь текст для поиска</fit-text></div><ui-icon name="art"></ui-icon></div>
<div class="tv"><ui-icon name="taskview" style="margin-left:-3px"></ui-icon></div>
<task-app icon="edge" front open></task-app><div class="stack"></div>
<task-app icon="folder" open></task-app><task-app icon="telegram"></task-app><task-app icon="ubuntu"></task-app><task-app icon="git"></task-app><task-app icon="docker"></task-app><task-app icon="ccleaner"></task-app><task-app icon="kali"></task-app><task-app icon="utorrent" open></task-app><task-app icon="pycharm" open></task-app>
<div class="tray"><ui-icon name="chev"></ui-icon><ui-icon name="cam" style="margin-left:14px"></ui-icon><ui-icon name="batt" style="margin-left:12px"></ui-icon><ui-icon name="wifi" style="margin-left:12px"></ui-icon><ui-icon name="vol" style="margin-left:10px"></ui-icon>
<div style="margin-left:12px;font-size:15px"><fit-text w="28">ENG</fit-text></div>
<div class="clk"><fit-text w="34">16:21</fit-text><fit-text w="70">06.06.2022</fit-text></div>
<ui-icon name="note" style="margin:10px 0 0 23px"></ui-icon><div class="end"></div></div>`);

/* single-line text tracked so that it fills exactly w pixels */
component('fit-text','<style>:host{display:inline-block;white-space:nowrap}</style><slot></slot>',h=>{
  const w=+h.getAttribute('w'), n=h.getBoundingClientRect().width;
  let c=0;
  const walk=e=>{for(const k of e.childNodes){if(k.nodeType===3)c+=k.data.length;else if(k.localName!=='tex-m')walk(k);}};
  walk(h);
  if(w&&n&&c){h.style.letterSpacing=((w-n)/c)+'px';h.style.width=w+'px';}
});
</script>
</body>
</html>
